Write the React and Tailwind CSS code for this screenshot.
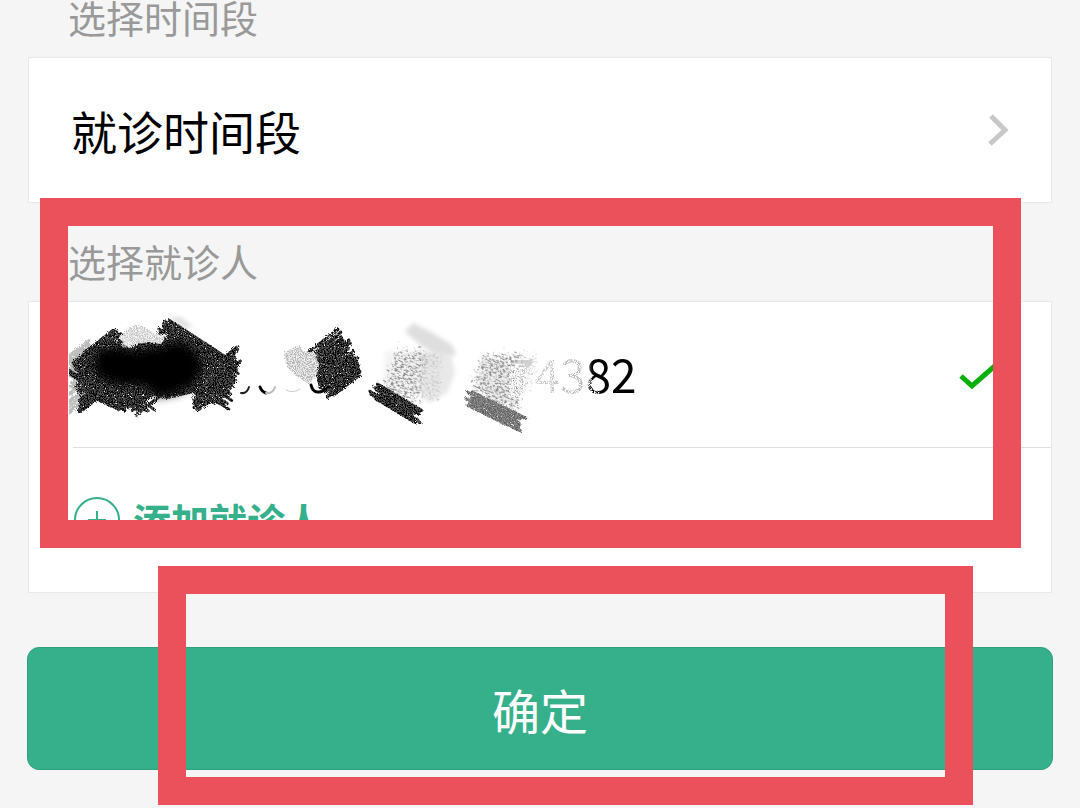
import { useState } from "react";

// small seeded generator so the scribbles stay the same on every render
const makeRandom = (seed) => () => {
  seed = (seed * 16807) % 2147483647;
  return seed / 2147483647;
};

// hatch lines laid along a spine from (x1, y1) to (x2, y2)
const hatch = ({ x1, y1, x2, y2, angle, min, max, count, seed }) => {
  const random = makeRandom(seed * 7919);
  const dx = Math.cos((angle * Math.PI) / 180);
  const dy = Math.sin((angle * Math.PI) / 180);
  let d = "";

  for (let i = 0; i < count; i++) {
    const t = i / (count - 1);
    const cx = x1 + (x2 - x1) * t + (random() - 0.5) * 6;
    const cy = y1 + (y2 - y1) * t + (random() - 0.5) * 3;
    const half = (min + (max - min) * random()) / 2;
    d += `M${(cx - dx * half).toFixed(1)} ${(cy - dy * half).toFixed(1)}L${(cx + dx * half).toFixed(1)} ${(cy + dy * half).toFixed(1)}`;
  }

  return d;
};

const darkStrokes = [
  { x1: 96, y1: 342, x2: 100, y2: 394, angle: -38, min: 36, max: 58, count: 26, seed: 11 },
  { x1: 92, y1: 388, x2: 124, y2: 390, angle: 36, min: 48, max: 70, count: 16, seed: 23 },
  { x1: 140, y1: 346, x2: 156, y2: 396, angle: -38, min: 40, max: 60, count: 24, seed: 37 },
  { x1: 200, y1: 340, x2: 190, y2: 386, angle: 33, min: 72, max: 88, count: 24, seed: 41 },
  { x1: 216, y1: 362, x2: 214, y2: 396, angle: -38, min: 40, max: 56, count: 18, seed: 59 },
  { x1: 322, y1: 342, x2: 346, y2: 384, angle: -38, min: 28, max: 48, count: 26, seed: 67 },
  { x1: 398, y1: 395, x2: 392, y2: 410, angle: 31, min: 40, max: 56, count: 12, seed: 71 },
];

// filled middles of the dark scribbles, the hatch lines give them their edges
const darkFills = [
  "M84 352L110 338L122 346L152 340L164 322L180 326L206 342L226 356L232 374L226 392L214 404L192 392L166 398L150 394L132 402L118 410L96 400L82 388L84 366Z",
  "M318 344L328 340L342 348L354 358L360 370L350 382L330 390L318 388L314 366Z",
  "M376 393L390 394L416 410L410 416L390 406Z",
];

const lightStrokes = [
  { x1: 78, y1: 348, x2: 76, y2: 408, angle: -38, min: 16, max: 30, count: 22, seed: 83 },
];

const grayStrokes = { x1: 496, y1: 403, x2: 493, y2: 418, angle: 26, min: 48, max: 60, count: 12, seed: 97 };

const DarkHatch = ({ color }) => (
  <>
    {darkStrokes.map((s) => (
      <path key={s.seed} d={hatch(s)} stroke={color} strokeWidth="3" />
    ))}
    {darkFills.map((d) => (
      <path key={d} d={d} fill={color} />
    ))}
  </>
);

const Scribble = () => (
  <svg
    className="relative z-10 h-36 w-[440px] shrink-0 overflow-visible"
    viewBox="68 300 440 144"
    aria-hidden="true"
  >
    <defs>
      <clipPath id="row-edge">
        <rect x="68" y="302" width="600" height="144" />
      </clipPath>
      <filter id="grain" x="-5%" y="-5%" width="110%" height="110%">
        <feTurbulence type="fractalNoise" baseFrequency="0.9" numOctaves="2" seed="4" result="noise" />
        <feColorMatrix in="noise" type="matrix" values="0 0 0 0 0  0 0 0 0 0  0 0 0 0 0  6 0 0 0 -2.6" result="mask" />
        <feDisplacementMap in="SourceGraphic" in2="noise" scale="4" result="rough" />
        <feComposite in="rough" in2="mask" operator="in" />
      </filter>
      <filter id="rough" x="-5%" y="-5%" width="110%" height="110%">
        <feTurbulence type="fractalNoise" baseFrequency="0.9" numOctaves="2" seed="4" result="noise" />
        <feColorMatrix in="noise" type="matrix" values="0 0 0 0 0  0 0 0 0 0  0 0 0 0 0  0 9 0 0 -2.2" result="mask" />
        <feDisplacementMap in="SourceGraphic" in2="noise" scale="4" result="rough" />
        <feComposite in="rough" in2="mask" operator="in" />
      </filter>
      <filter id="dust" x="-10%" y="-10%" width="120%" height="120%">
        <feTurbulence type="fractalNoise" baseFrequency="0.3 0.8" numOctaves="3" seed="9" result="noise" />
        <feColorMatrix in="noise" type="matrix" values="0 0 0 0 0  0 0 0 0 0  0 0 0 0 0  6 0 0 0 -2.9" result="mask" />
        <feDisplacementMap in="SourceGraphic" in2="noise" scale="20" result="rough" />
        <feComposite in="rough" in2="mask" operator="in" />
      </filter>
      <filter id="soft" x="-20%" y="-20%" width="140%" height="140%">
        <feGaussianBlur stdDeviation="5" />
      </filter>
      <filter id="haze" x="-20%" y="-20%" width="140%" height="140%">
        <feGaussianBlur stdDeviation="2" />
      </filter>
    </defs>

    <g clipPath="url(#row-edge)">
      {/* pale smears */}
      <g filter="url(#haze)">
        <path d="M404 331L412 322L428 330L450 343L456 354L442 356L422 346Z" fill="#dedede" />
        <path d="M414 350L450 353L454 372L446 392L428 402L416 390Z" fill="#e8e8e8" />
        <path d="M480 354L506 360L520 386L514 404L486 398L478 380Z" fill="#eeeeee" />
        <path d="M384 350L416 350L420 392L382 388Z" fill="#f4f4f4" />
        <path d="M166 316L180 316L192 326L184 328Z" fill="#e0e0e0" />
      </g>

      {/* light gray hatching */}
      <g strokeLinecap="round" fill="none">
        {lightStrokes.map((s) => (
          <path key={s.seed} d={hatch(s)} stroke="#bdbdbd" strokeWidth="3" filter="url(#rough)" />
        ))}
        <path d={hatch(grayStrokes)} stroke="#8a8a8a" strokeWidth="3" filter="url(#rough)" />
        <path d={hatch(grayStrokes)} stroke="#5e5e5e" strokeWidth="3" filter="url(#grain)" />
      </g>

      {/* scattered grains, turned along the direction of the rubbing */}
      <g transform="rotate(28 400 378)">
        <path d="M382 356L410 342L424 384L420 402L390 404Z" fill="#8a8a8a" filter="url(#dust)" />
        <path d="M408 342L426 338L442 378L424 386Z" fill="#c8c8c8" filter="url(#dust)" />
      </g>
      <g transform="rotate(28 500 386)">
        <path d="M470 366L502 346L520 372L526 398L500 406L474 402Z" fill="#8a8a8a" filter="url(#dust)" />
        <path d="M500 352L518 342L528 372L516 378Z" fill="#c8c8c8" filter="url(#dust)" />
      </g>

      {/* dark hatching, gray below and black grains on top */}
      <g filter="url(#rough)" strokeLinecap="round" fill="none">
        <DarkHatch color="#505050" />
      </g>
      <g filter="url(#grain)" strokeLinecap="round" fill="none">
        <DarkHatch color="#000000" />
      </g>

      {/* solid core of the first scribble */}
      <path
        d="M96 350L116 346L136 350L158 346L180 340L194 350L202 364L196 380L178 392L156 396L144 384L122 384L102 380L92 366Z"
        fill="#000000"
        filter="url(#soft)"
      />

      {/* light patches over the dark hatching */}
      <g filter="url(#rough)">
        <path d="M118 337L126 328L134 324L142 325L154 333L166 334L160 343L148 341L138 342L128 347Z" fill="#f2f2f2" />
        <path d="M283 352L298 344L302 350L314 352L318 364L314 376L308 383L294 374L286 366Z" fill="#ececec" />
      </g>
      <g filter="url(#grain)">
        <path d="M118 337L126 328L134 324L142 325L154 333L166 334L160 343L148 341L138 342L128 347Z" fill="#c4c4c4" />
        <path d="M283 352L298 344L302 350L314 352L318 364L314 376L308 383L294 374L286 366Z" fill="#b4b4b4" />
      </g>

      {/* wiped parts of the digits */}
      <path d="M508 366L536 366L550 354L584 354L588 374L600 384L598 397L508 397Z" fill="#ffffff" filter="url(#grain)" />

      {/* what is left of the covered digits */}
      <g fill="none" strokeLinecap="round">
        <path d="M240 392Q246 393 248 386" stroke="#222222" strokeWidth="2" />
        <path d="M259 386Q261 391 265 392" stroke="#000000" strokeWidth="3" />
        <path d="M265 392Q272 393 274 386" stroke="#bbbbbb" strokeWidth="2" />
        <path d="M285 389Q292 393 299 388" stroke="#cccccc" strokeWidth="1" />
        <path d="M310 384Q312 392 318 391Q322 391 324 388" stroke="#000000" strokeWidth="3" />
      </g>
    </g>
  </svg>
);

const SectionLabel = ({ children }) => (
  <h2 className="mb-[23px] pl-10 text-[38px] leading-[34px] text-[#999999]">
    {children}
  </h2>
);

const Chevron = () => (
  <svg className="h-8 w-6" viewBox="0 0 24 32" fill="none" aria-hidden="true">
    <path d="M4 2L18 16L3 30" stroke="#c8c8c8" strokeWidth="5" />
  </svg>
);

const App = () => {
  const [selected, setSelected] = useState(true);

  return (
    <main className="bg-[#f5f5f5] px-7 pb-[38px] font-['Noto_Sans_CJK_SC',sans-serif]">
      <section>
        <SectionLabel>选择时间段</SectionLabel>
        <div className="border border-[#e8e8e8] bg-white">
          <button className="flex h-36 w-full items-center justify-between pl-[42px] pr-10 text-[46px] leading-[46px] text-black">
            就诊时间段
            <Chevron />
          </button>
        </div>
      </section>

      <section className="relative pt-[41px]">
        <SectionLabel>选择就诊人</SectionLabel>
        <div className="border border-[#e8e8e8] bg-white">
          <button
            aria-pressed={selected}
            onClick={() => setSelected(!selected)}
            className="flex h-[145px] w-full items-center pb-1 pl-10 pr-12 text-[46px] leading-[46px]"
          >
            <Scribble />
            <span className="bg-linear-to-r from-[#e0e0e0] from-0% via-[#b4b4b4] via-60% to-black to-66% bg-clip-text text-transparent">
              74382
            </span>
            {selected && (
              <svg className="ml-auto h-8 w-11" viewBox="0 0 44 32" fill="none" aria-hidden="true">
                <path d="M2 19L13 29L38 7" stroke="#09b007" strokeWidth="5" />
              </svg>
            )}
          </button>
          <hr className="ml-11 border-[#e0e0e0]" />
          <button className="flex h-36 w-full items-center gap-3 pl-11 text-[38px] font-bold leading-[38px] text-[#36b08b]">
            <svg className="size-12" viewBox="0 0 48 48" fill="none" stroke="currentColor" strokeWidth="2" aria-hidden="true">
              <circle cx="24" cy="24" r="22" />
              <path d="M15 24H33M24 15V33" />
            </svg>
            添加就诊人
          </button>
        </div>
        {/* highlight over the patient list */}
        <div className="pointer-events-none absolute -top-[5px] bottom-[45px] left-3 right-[31px] z-20 border-[28px] border-[#eb515b]" />
      </section>

      <div className="relative -mx-px mt-[54px]">
        <button className="h-[123px] w-full rounded-xl border border-[#2fa07e] bg-[#36b08b] text-5xl text-white">
          确定
        </button>
        {/* highlight over the submit button */}
        <div className="pointer-events-none absolute -bottom-[35px] -top-[81px] left-[131px] right-20 border-[28px] border-[#eb515b]" />
      </div>
    </main>
  );
};

export default App;
